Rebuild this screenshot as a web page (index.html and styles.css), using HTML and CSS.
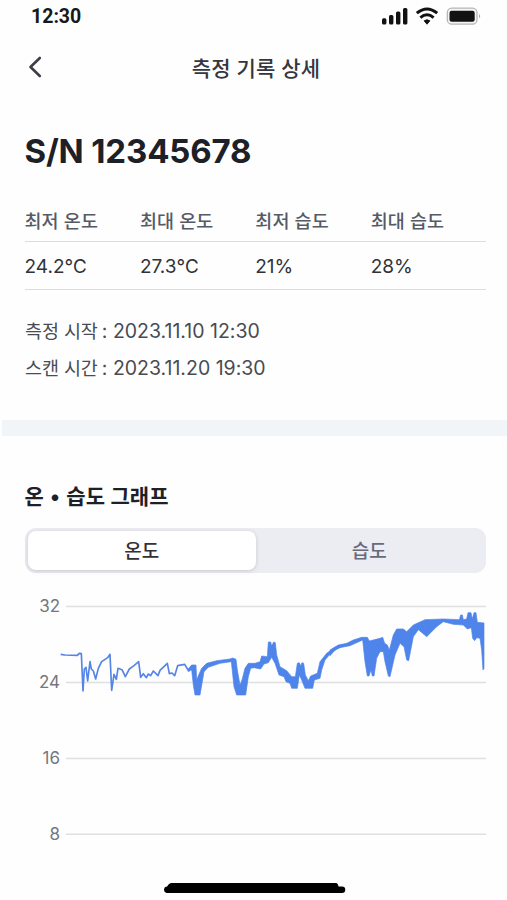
FILE: index.html
```html
<!DOCTYPE html>
<html lang="ko">
<head>
<meta charset="utf-8">
<title>측정 기록 상세</title>
<link rel="stylesheet" href="styles.css">
</head>
<body>
<div class="screen">
  <div class="status">
    <span class="clock">12:30</span>
    <svg class="status-icons" width="102" height="20" viewBox="380 6 102 20">
      <g fill="#111214">
        <rect x="382" y="18.2" width="4.4" height="6.3" rx="1.5"/>
        <rect x="389" y="15" width="4.4" height="9.5" rx="1.5"/>
        <rect x="396" y="11.5" width="4.4" height="13" rx="1.5"/>
        <rect x="403" y="8" width="4.4" height="16.5" rx="1.5"/>
        <path d="M424.2 20.8Q427 18.8 429.8 20.8L427 24.2Z" stroke="#111214" stroke-linejoin="round" stroke-width="1"/>
      </g>
      <path d="M416.8 13.2Q427 4.8 437.2 13.2M420.4 17.6Q427 12 433.6 17.6" fill="none" stroke="#111214" stroke-width="3"/>
      <rect x="447.3" y="8.2" width="29.7" height="16" rx="4.5" fill="#f4f4f4" stroke="#b6b6b6" stroke-width="1.3"/>
      <rect x="449.5" y="10.8" width="25.2" height="11" rx="2.2" fill="#111214"/>
      <path d="M479 13.8Q481.5 16.2 479 18.6Z" fill="#b0b0b0"/>
    </svg>
  </div>
  <header class="nav">
    <svg class="back" width="14" height="22" viewBox="0 0 14 22"><path d="M11.8 2L2.5 11L11.8 20" fill="none" stroke="#3c3f46" stroke-width="2.6" stroke-linecap="round" stroke-linejoin="round"/></svg>
    <h1 class="nav-title">측정 기록 상세</h1>
  </header>
  <section class="summary">
    <h2 class="serial">S/N 12345678</h2>
    <div class="row labels"><span>최저 온도</span><span>최대 온도</span><span>최저 습도</span><span>최대 습도</span></div>
    <div class="row values"><span>24.2℃</span><span>27.3℃</span><span>21%</span><span>28%</span></div>
    <div class="times">
      <p><span class="ko">측정 시작</span> : 2023.11.10 12:30</p>
      <p><span class="ko">스캔 시간</span> : 2023.11.20 19:30</p>
    </div>
  </section>
  <div class="band"></div>
  <section class="graph">
    <h3 class="graph-title">온 <span class="dot">•</span> 습도 그래프</h3>
    <div class="tabs"><span class="tab active">온도</span><span class="tab">습도</span></div>
    <svg class="chart" width="462" height="250" viewBox="24 596 462 250">
      <g stroke="#dfe0e2" stroke-width="1.5">
        <path d="M66 606.4H486M66 682.4H486M66 758.4H486M66 834.2H486"/>
      </g>
      <g class="axis" text-anchor="end">
        <text x="60" y="612">32</text><text x="60" y="688">24</text><text x="60" y="764">16</text><text x="60" y="840">8</text>
      </g>
      <g transform="translate(30 595) scale(.33333)">
        <path class="trace" d="M92 178L105 180L142 181L148 175L154 176L159 288L163 222L168 217L173 258L180 200L184 222L190 228L197 252L205 220L215 200L233 188L240 178L245 286L252 238L259 253L264 220L276 224L286 245L298 222L312 212L326 200L332 247L340 236L349 248L355 237L362 242L370 228L384 242L390 226L412 205L418 236L426 234L434 242L443 212L464 208L476 228L486 212L494 222"/>
      </g>
      <g transform="translate(180 620) scale(.33333)">
        <path class="area" d="M24 148L35 135L48 135L50 180L56 165L65 145L80 130L110 122L150 117L158 114L168 118L172 150L180 195L186 180L195 145L205 130L225 130L240 125L245 108L262 110L265 66L272 66L275 78L281 66L286 68L290 105L300 140L320 152L335 170L346 170L352 130L358 128L362 138L366 128L371 130L376 165L385 182L392 168L412 160L420 125L440 100L465 82L481 75V82L455 97L435 120L425 150L420 175L403 180L398 205L375 205L365 180L358 165L352 205L335 205L330 190L318 185L312 170L297 165L285 130L275 112L265 128L252 132L242 147L222 143L212 145L205 170L197 225L170 225L162 200L154 125L120 130L85 142L72 155L60 225L45 225L40 195L35 150L26 153Z"/>
      </g>
      <g transform="translate(330 595) scale(.33333)">
        <path class="area" d="M0 165L25 150L50 145L70 135L95 127L112 127L118 138L150 130L158 127L164 145L172 150L178 165L190 120L200 102L220 102L230 110L250 90L285 74L340 72L388 74L392 60L397 60L400 74L410 72L414 53L423 53L427 72L432 53L438 53L442 82L462 84L462 220L459 225L455 165L450 130L440 128L434 137L428 130L424 98L412 102L400 90L370 88L340 80L320 95L290 125L278 115L265 104L250 125L236 197L230 195L222 155L210 145L195 180L180 245L175 243L165 200L160 170L150 170L140 190L132 243L127 243L123 225L117 243L112 243L105 200L98 135L60 152L20 160L0 182Z"/>
      </g>
    </svg>
  </section>
  <svg class="home" width="182" height="10" viewBox="0 0 182 10"><path d="M7 0H172Q174 0 174.5 3.5H178A3.2 3.2 0 0 1 178 10H3.5A3.2 3.2 0 0 1 3 3.5Q5 0 7 0Z"/></svg>
</div>
</body>
</html>
```

FILE: styles.css
```css
* { box-sizing: border-box; margin: 0; padding: 0; }
body { background: #fefefe; font-family: Inter, "Noto Sans CJK KR", sans-serif; color: #1d2026; }
.screen { width: 507px; height: 900px; overflow: hidden; display: flex; flex-direction: column; }
.status { height: 34px; flex: none; display: flex; justify-content: space-between; align-items: flex-start; padding: 6px 25px 0 31px; }
.clock { font: 700 19.5px/22px Roboto, sans-serif; color: #17181a; }
.nav { height: 66px; flex: none; display: grid; grid-template-columns: 62px 1fr 57px; align-items: center; }
.back { margin-left: 28px; }
.nav-title { padding-top: 3px; font-size: 21px; font-weight: 500; line-height: 30px; text-align: center; color: #34373f; letter-spacing: .15px; white-space: nowrap; }
.summary { height: 320px; flex: none; padding: 30px 21px 0 25px; }
.serial { margin-left: -.5px; font-size: 33px; line-height: 42px; font-weight: 700; letter-spacing: -.15px; white-space: nowrap; }
.row { display: grid; grid-template-columns: repeat(4, 115.4px); border-bottom: 1.5px solid #dcdddf; white-space: nowrap; }
.row span { margin-left: -.5px; }
.labels { margin-top: 29px; height: 41px; line-height: 41px; font-size: 18.5px; font-weight: 500; color: #565a65; letter-spacing: .1px; }
.values { height: 48px; line-height: 50px; font-size: 19px; color: #303238; }
.times { margin-top: 23px; font-size: 19.5px; line-height: 36.5px; color: #484b53; white-space: nowrap; }
.ko { font-size: 18.5px; font-weight: 400; letter-spacing: -.1px; margin-right: -1.5px; }
.band { height: 16px; flex: none; margin-left: 2px; background: #f2f5f7; }
.graph { height: 447px; flex: none; padding: 46px 21px 0 25px; }
.graph-title { margin-left: -.5px; font-size: 21px; line-height: 30px; font-weight: 700; letter-spacing: .15px; white-space: nowrap; }
.dot { margin: 0 1px; }
.tabs { display: flex; margin-top: 16px; height: 45px; padding: 3px; border-radius: 11px; background: #ecedf2; }
.tab { flex: 1; line-height: 41px; text-align: center; font-size: 19px; font-weight: 500; color: #656b7b; }
.tab.active { border-radius: 8px; background: #fff; color: #303238; box-shadow: 0 1px 4px rgba(0, 0, 0, .16); }
.chart { display: block; margin: 23px 0 0 -1px; }
.axis { font-size: 17px; fill: #74777d; }
.trace { fill: none; stroke: #5585e5; stroke-width: 5; stroke-linejoin: round; }
.area { fill: #4f84ea; stroke: #4f84ea; stroke-width: 2; stroke-linejoin: round; }
.home { align-self: center; flex: none; margin-left: 2px; }
```
